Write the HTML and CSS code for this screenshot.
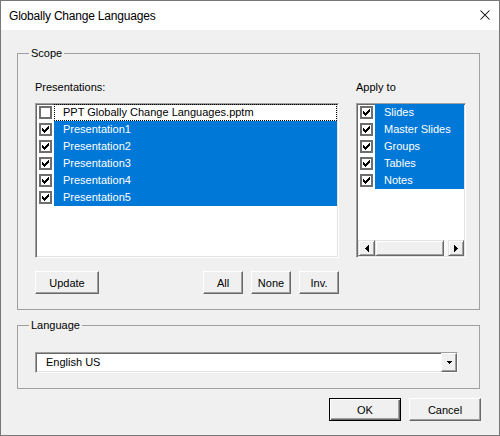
FILE: index.html
```html
<!DOCTYPE html>
<html>
<head>
<meta charset="utf-8">
<link rel="stylesheet" href="styles.css">
</head>
<body>
<div class="window">
  <div class="titlebar">
    <span class="title">Globally Change Languages</span>
    <svg class="close" viewBox="0 0 10 10" width="10" height="10"><path d="M0.5 0.5L9.5 9.5M9.5 0.5L0.5 9.5" stroke="#000" stroke-width="1.05" fill="none"/></svg>
  </div>
  <div class="content">
    <fieldset class="group scope">
      <legend>Scope</legend>
      <div class="scope-grid">
        <div class="col">
          <div class="caption">Presentations:</div>
          <div class="listbox pres-list">
            <div class="item focus"><span class="check"></span><span class="label">PPT Globally Change Languages.pptm</span></div>
            <div class="item sel"><span class="check"><svg viewBox="0 0 7 7" width="7" height="7" shape-rendering="crispEdges"><path d="M6 0h1v1h-1zM5 1h2v1h-2zM0 2h1v1h-1zM4 2h3v1h-3zM0 3h2v1h-2zM3 3h3v1h-3zM0 4h5v1h-5zM1 5h3v1h-3zM2 6h1v1h-1z"/></svg></span><span class="label">Presentation1</span></div>
            <div class="item sel"><span class="check"><svg viewBox="0 0 7 7" width="7" height="7" shape-rendering="crispEdges"><path d="M6 0h1v1h-1zM5 1h2v1h-2zM0 2h1v1h-1zM4 2h3v1h-3zM0 3h2v1h-2zM3 3h3v1h-3zM0 4h5v1h-5zM1 5h3v1h-3zM2 6h1v1h-1z"/></svg></span><span class="label">Presentation2</span></div>
            <div class="item sel"><span class="check"><svg viewBox="0 0 7 7" width="7" height="7" shape-rendering="crispEdges"><path d="M6 0h1v1h-1zM5 1h2v1h-2zM0 2h1v1h-1zM4 2h3v1h-3zM0 3h2v1h-2zM3 3h3v1h-3zM0 4h5v1h-5zM1 5h3v1h-3zM2 6h1v1h-1z"/></svg></span><span class="label">Presentation3</span></div>
            <div class="item sel"><span class="check"><svg viewBox="0 0 7 7" width="7" height="7" shape-rendering="crispEdges"><path d="M6 0h1v1h-1zM5 1h2v1h-2zM0 2h1v1h-1zM4 2h3v1h-3zM0 3h2v1h-2zM3 3h3v1h-3zM0 4h5v1h-5zM1 5h3v1h-3zM2 6h1v1h-1z"/></svg></span><span class="label">Presentation4</span></div>
            <div class="item sel"><span class="check"><svg viewBox="0 0 7 7" width="7" height="7" shape-rendering="crispEdges"><path d="M6 0h1v1h-1zM5 1h2v1h-2zM0 2h1v1h-1zM4 2h3v1h-3zM0 3h2v1h-2zM3 3h3v1h-3zM0 4h5v1h-5zM1 5h3v1h-3zM2 6h1v1h-1z"/></svg></span><span class="label">Presentation5</span></div>
          </div>
          <div class="btn-row">
            <button class="btn btn-update">Update</button>
            <div class="btn-group">
              <button class="btn btn-sm">All</button>
              <button class="btn btn-sm">None</button>
              <button class="btn btn-sm">Inv.</button>
            </div>
          </div>
        </div>
        <div class="col">
          <div class="caption">Apply to</div>
          <div class="listbox apply-list">
            <div class="items">
              <div class="item sel"><span class="check"><svg viewBox="0 0 7 7" width="7" height="7" shape-rendering="crispEdges"><path d="M6 0h1v1h-1zM5 1h2v1h-2zM0 2h1v1h-1zM4 2h3v1h-3zM0 3h2v1h-2zM3 3h3v1h-3zM0 4h5v1h-5zM1 5h3v1h-3zM2 6h1v1h-1z"/></svg></span><span class="label">Slides</span></div>
              <div class="item sel"><span class="check"><svg viewBox="0 0 7 7" width="7" height="7" shape-rendering="crispEdges"><path d="M6 0h1v1h-1zM5 1h2v1h-2zM0 2h1v1h-1zM4 2h3v1h-3zM0 3h2v1h-2zM3 3h3v1h-3zM0 4h5v1h-5zM1 5h3v1h-3zM2 6h1v1h-1z"/></svg></span><span class="label">Master Slides</span></div>
              <div class="item sel"><span class="check"><svg viewBox="0 0 7 7" width="7" height="7" shape-rendering="crispEdges"><path d="M6 0h1v1h-1zM5 1h2v1h-2zM0 2h1v1h-1zM4 2h3v1h-3zM0 3h2v1h-2zM3 3h3v1h-3zM0 4h5v1h-5zM1 5h3v1h-3zM2 6h1v1h-1z"/></svg></span><span class="label">Groups</span></div>
              <div class="item sel"><span class="check"><svg viewBox="0 0 7 7" width="7" height="7" shape-rendering="crispEdges"><path d="M6 0h1v1h-1zM5 1h2v1h-2zM0 2h1v1h-1zM4 2h3v1h-3zM0 3h2v1h-2zM3 3h3v1h-3zM0 4h5v1h-5zM1 5h3v1h-3zM2 6h1v1h-1z"/></svg></span><span class="label">Tables</span></div>
              <div class="item sel"><span class="check"><svg viewBox="0 0 7 7" width="7" height="7" shape-rendering="crispEdges"><path d="M6 0h1v1h-1zM5 1h2v1h-2zM0 2h1v1h-1zM4 2h3v1h-3zM0 3h2v1h-2zM3 3h3v1h-3zM0 4h5v1h-5zM1 5h3v1h-3zM2 6h1v1h-1z"/></svg></span><span class="label">Notes</span></div>
            </div>
            <div class="hscroll">
              <span class="sb-btn"><svg viewBox="0 0 4 7" width="4" height="7" shape-rendering="crispEdges"><path d="M3 0h1v7h-1zM2 1h1v5h-1zM1 2h1v3h-1zM0 3h1v1h-1z"/></svg></span>
              <span class="sb-thumb"></span>
              <span class="sb-track"></span>
              <span class="sb-btn sb-right"><svg viewBox="0 0 4 7" width="4" height="7" shape-rendering="crispEdges"><path d="M0 0h1v7h-1zM1 1h1v5h-1zM2 2h1v3h-1zM3 3h1v1h-1z"/></svg></span>
            </div>
          </div>
        </div>
      </div>
    </fieldset>
    <fieldset class="group language">
      <legend>Language</legend>
      <div class="combo">
        <span class="combo-text">English US</span>
        <span class="combo-btn"><svg viewBox="0 0 5 3" width="5" height="3" shape-rendering="crispEdges"><path d="M0 0h5v1h-5zM1 1h3v1h-3zM2 2h1v1h-1z"/></svg></span>
      </div>
    </fieldset>
    <div class="footer">
      <button class="btn btn-wide btn-default">OK</button>
      <button class="btn btn-wide">Cancel</button>
    </div>
  </div>
</div>
</body>
</html>
```

FILE: styles.css
```css
* { box-sizing: border-box; }
html, body { margin: 0; padding: 0; }
body {
  width: 500px;
  height: 436px;
  overflow: hidden;
  background: #f0f0f0;
  font-family: "Liberation Sans", Arial, sans-serif;
  font-size: 11px;
  color: #000;
}
.window {
  width: 500px;
  height: 436px;
  border: 1px solid #777;
  background: #f0f0f0;
  display: flex;
  flex-direction: column;
}
.titlebar {
  flex: none;
  height: 29px;
  background: #fff;
  display: flex;
  align-items: center;
  justify-content: space-between;
  padding: 0 9px 0 8px;
}
.title {
  font-size: 12px;
  letter-spacing: -0.2px;
  line-height: 14px;
}
.close { display: block; margin-top: -2px; }
.content {
  padding: 0 18px 0 16px;
}
.group {
  margin: 0;
  width: 463px;
  min-inline-size: 0;
  border: 1px solid #a0a0a0;
  padding: 0 0 15px 11px;
}
.group legend {
  padding: 0 2px;
  font-size: 11px;
  line-height: 13px;
}
.scope { margin-top: 17px; }
.scope-grid {
  display: grid;
  grid-template-columns: 304px 110px;
  column-gap: 17px;
  margin-left: 6px;
  padding-top: 21px;
}
.caption {
  height: 13px;
  line-height: 13px;
  white-space: nowrap;
}
.listbox {
  margin-top: 9px;
  height: 155px;
  background: #fff;
  border: 1px solid;
  border-color: #a0a0a0 #fff #fff #a0a0a0;
  box-shadow: inset 1px 1px #696969, inset -1px -1px #e3e3e3;
  padding: 0 1px 1px 1px;
  display: flex;
  flex-direction: column;
}
.items { flex: 1; }
.item {
  display: flex;
  align-items: center;
  height: 17px;
}
.check {
  flex: none;
  width: 13px;
  height: 13px;
  margin-left: 2px;
  border: 2px solid #6e6e6e;
  background: #fff;
  display: flex;
  align-items: center;
  justify-content: center;
}
.check svg { display: block; }
.label {
  flex: 1;
  margin-left: 2px;
  height: 17px;
  line-height: 17px;
  padding-left: 9px;
  white-space: nowrap;
  overflow: hidden;
}
.item.sel .label { background: #0078d7; color: #fff; }
.item.focus .label { outline: 1px dotted #000; outline-offset: -1px; }
.btn {
  font-family: inherit;
  font-size: 11px;
  color: #000;
  height: 23px;
  padding: 0;
  background: #f0f0f0;
  border: 1px solid;
  border-color: #fff #696969 #696969 #fff;
  box-shadow: inset -1px -1px #a0a0a0;
}
.btn-row {
  display: flex;
  justify-content: space-between;
  margin-top: 13px;
}
.btn-update { width: 64px; }
.btn-group { display: flex; gap: 8px; }
.btn-sm { width: 40px; }
.hscroll {
  flex: none;
  height: 16px;
  display: flex;
}
.sb-btn {
  flex: none;
  width: 17px;
  height: 16px;
  background: #f0f0f0;
  border: 1px solid;
  border-color: #e3e3e3 #696969 #696969 #e3e3e3;
  box-shadow: inset 1px 1px #fff, inset -1px -1px #a0a0a0;
  display: flex;
  align-items: center;
  justify-content: center;
}
.sb-right { width: 16px; }
.sb-thumb {
  flex: none;
  width: 69px;
  height: 16px;
  background: #f0f0f0;
  border: 1px solid;
  border-color: #e3e3e3 #696969 #696969 #e3e3e3;
  box-shadow: inset 1px 1px #fff, inset -1px -1px #a0a0a0;
}
.sb-track {
  flex: 1;
  background: repeating-conic-gradient(#fff 0 25%, #f0f0f0 0 50%) 0 0 / 2px 2px;
}
.language { margin-top: 9px; padding-bottom: 15px; }
.combo {
  margin: 20px 0 0 6px;
  width: 423px;
  height: 21px;
  background: #fff;
  border: 1px solid;
  border-color: #a0a0a0 #fff #fff #a0a0a0;
  box-shadow: inset 1px 1px #696969, inset -1px -1px #e3e3e3;
  display: flex;
  align-items: center;
}
.combo-text {
  flex: 1;
  padding-left: 10px;
  line-height: 17px;
}
.combo-btn {
  flex: none;
  width: 16px;
  height: 19px;
  background: #f0f0f0;
  border: 1px solid;
  border-color: #fff #696969 #696969 #fff;
  box-shadow: inset -1px -1px #a0a0a0;
  display: flex;
  align-items: center;
  justify-content: center;
}
.footer {
  display: flex;
  justify-content: flex-end;
  gap: 8px;
  margin-top: 9px;
}
.btn-wide { width: 72px; }
.btn-default {
  border: 1px solid #000;
  box-shadow: inset 1px 1px #fff, inset -1px -1px #696969, inset -2px -2px #a0a0a0;
}
```
